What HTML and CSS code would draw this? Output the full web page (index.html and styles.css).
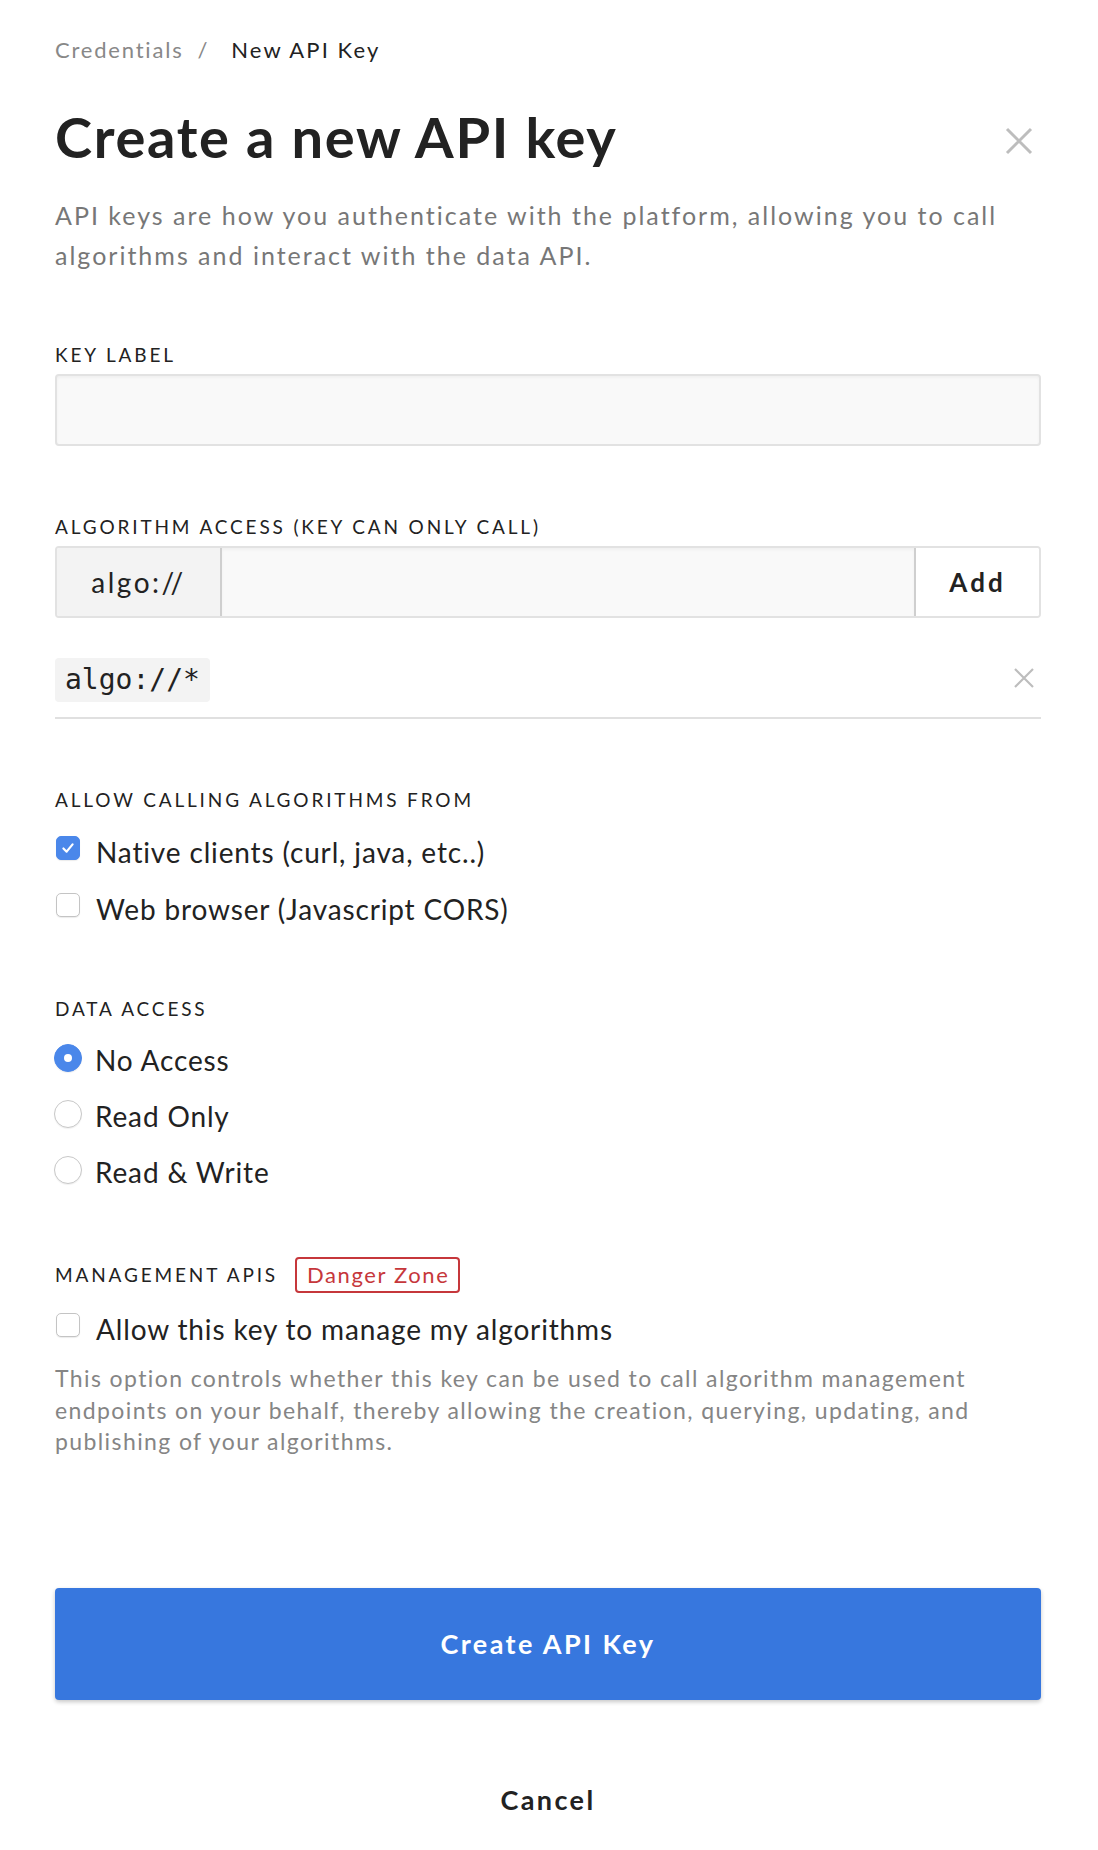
FILE: index.html
```html
<!DOCTYPE html>
<html lang="en">
<head>
<meta charset="utf-8">
<title>New API Key</title>
<link rel="stylesheet" href="styles.css">
</head>
<body>
<main class="page">
  <nav class="crumbs">
    <span class="crumb-link">Credentials</span>
    <span class="crumb-sep">/</span>
    <span class="crumb-current">New API Key</span>
  </nav>

  <header class="title-row">
    <h1 class="title">Create a new API key</h1>
    <button class="close" type="button" aria-label="Close">
      <svg width="28" height="28" viewBox="0 0 28 28"><path d="M2 2L26 26M26 2L2 26" stroke="#bdbdbd" stroke-width="3" fill="none"/></svg>
    </button>
  </header>

  <p class="intro">API keys are how you authenticate with the platform, allowing you to call<br>algorithms and interact with the data API.</p>

  <section class="field field-key">
    <div class="label">Key Label</div>
    <div class="input"></div>
  </section>

  <section class="field field-algo">
    <div class="label">Algorithm Access (Key can only call)</div>
    <div class="input-group">
      <div class="addon">algo://</div>
      <div class="group-input"></div>
      <button class="add-btn" type="button">Add</button>
    </div>
    <div class="tag-row">
      <code class="tag">algo://*</code>
      <button class="remove" type="button" aria-label="Remove">
        <svg width="20" height="20" viewBox="0 0 20 20"><path d="M1 1L19 19M19 1L1 19" stroke="#bdbdbd" stroke-width="2.2" fill="none"/></svg>
      </button>
    </div>
  </section>

  <section class="field field-allow">
    <div class="label">Allow calling algorithms from</div>
    <div class="check-row first">
      <span class="checkbox checked"><svg width="24" height="24" viewBox="0 0 24 24"><path d="M7 12.5L10.5 16L17 8" stroke="#fff" stroke-width="2.4" fill="none" stroke-linecap="round" stroke-linejoin="round"/></svg></span>
      <span class="opt-text">Native clients (curl, java, etc..)</span>
    </div>
    <div class="check-row">
      <span class="checkbox"></span>
      <span class="opt-text">Web browser (Javascript CORS)</span>
    </div>
  </section>

  <section class="field field-data">
    <div class="label">Data Access</div>
    <div class="radio-row first">
      <span class="radio checked"><span class="dot"></span></span>
      <span class="opt-text">No Access</span>
    </div>
    <div class="radio-row">
      <span class="radio"></span>
      <span class="opt-text">Read Only</span>
    </div>
    <div class="radio-row">
      <span class="radio"></span>
      <span class="opt-text">Read &amp; Write</span>
    </div>
  </section>

  <section class="field field-mgmt">
    <div class="mgmt-head">
      <div class="label">Management APIs</div>
      <span class="badge">Danger Zone</span>
    </div>
    <div class="check-row mgmt-row">
      <span class="checkbox"></span>
      <span class="opt-text">Allow this key to manage my algorithms</span>
    </div>
    <p class="help">This option controls whether this key can be used to call algorithm management<br>endpoints on your behalf, thereby allowing the creation, querying, updating, and<br>publishing of your algorithms.</p>
  </section>

  <button class="primary" type="button">Create API Key</button>
  <div class="cancel-wrap"><button class="cancel" type="button">Cancel</button></div>
</main>
</body>
</html>
```

FILE: styles.css
```css
* { box-sizing: border-box; }
html, body { margin: 0; padding: 0; background: #fff; }
body {
  font-family: Lato, "Noto Sans", sans-serif;
  color: #222;
}
button { font-family: inherit; border: 0; background: none; padding: 0; cursor: pointer; color: inherit; }

.page { padding: 35px 57px 30px 55px; }

.crumbs { display: flex; font-size: 22px; line-height: 30px; letter-spacing: 1.8px; }
.crumb-link { color: #888; }
.crumb-sep { color: #888; margin: 0 22px 0 14px; }
.crumb-current { color: #222; letter-spacing: 2.1px; }

.title-row { display: flex; justify-content: space-between; align-items: center; margin-top: 38px; }
.title { margin: 0; font-size: 56px; line-height: 67px; font-weight: 700; letter-spacing: 1.7px; color: #222; }
.close { width: 28px; height: 28px; margin: 9px 8px 0 0; display: flex; }

.intro { margin: 25px 0 0; font-size: 25px; line-height: 40px; letter-spacing: 2px; color: #777; }

.label {
  font-size: 19px; line-height: 24px; letter-spacing: 2.85px;
  text-transform: uppercase; color: #222;
}

.field-key { margin-top: 68px; }
.input {
  margin-top: 7px; height: 72px; background: #f9f9f9;
  border: 2px solid #e2e2e2; border-radius: 4px;
  box-shadow: inset 0 2px 3px rgba(0,0,0,0.04);
}

.field-algo { margin-top: 69px; }
.input-group {
  margin-top: 7px; display: flex; height: 72px;
  border: 2px solid #e2e2e2; border-radius: 4px; overflow: hidden;
}
.addon {
  width: 165px; background: #f3f3f3; border-right: 2px solid #cfcfcf;
  display: flex; align-items: center; justify-content: center;
  font-size: 28px; letter-spacing: 2.5px; color: #222;
}
.group-input { flex: 1; background: #f9f9f9; box-shadow: inset 0 2px 3px rgba(0,0,0,0.04); }
.add-btn {
  width: 125px; background: #fff; border-left: 2px solid #cfcfcf;
  font-size: 26px; font-weight: 700; letter-spacing: 3px; color: #222;
}

.tag-row {
  margin-top: 40px; display: flex; justify-content: space-between; align-items: center;
  padding-bottom: 15px; border-bottom: 2px solid #e0e0e0;
}
.tag {
  font-family: "DejaVu Sans Mono", "Liberation Mono", monospace;
  font-size: 28px; line-height: 44px; padding: 0 10px;
  background: #f3f3f3; border-radius: 4px; color: #222;
}
.remove { width: 20px; height: 20px; margin: 0 7px 4px 0; display: flex; }

.field-allow { margin-top: 69px; }
.check-row, .radio-row { display: flex; align-items: flex-start; height: 40px; }
.check-row.first { margin-top: 20px; }
.check-row + .check-row { margin-top: 17px; }
.opt-text { font-size: 28px; line-height: 40px; letter-spacing: 0.85px; color: #222; margin-left: 16px; }

.checkbox {
  width: 24px; height: 24px; margin: 4px 0 0 1px; flex: none;
  border: 1.5px solid #c4c4c4; border-radius: 5px; background: #fff;
  box-shadow: 0 1px 1px rgba(0,0,0,0.08);
  display: flex; align-items: center; justify-content: center;
}
.checkbox.checked { background: #4a87ea; border-color: #4a87ea; }
.checkbox svg { display: block; }

.field-data { margin-top: 68px; }
.radio-row.first { margin-top: 19px; }
.radio-row + .radio-row { margin-top: 16px; }
.radio {
  width: 28px; height: 28px; margin: 4px 0 0 -1px; flex: none;
  border: 1.5px solid #c8c8c8; border-radius: 50%; background: #fff;
  box-shadow: 0 1px 1px rgba(0,0,0,0.06);
  display: flex; align-items: center; justify-content: center;
}
.radio.checked { background: #4a87ea; border-color: #4a87ea; }
.dot { width: 8px; height: 8px; border-radius: 50%; background: #fff; }
.radio-row .opt-text { margin-left: 13px; }

.field-mgmt { margin-top: 65px; }
.mgmt-head { display: flex; align-items: center; gap: 17px; }
.badge {
  font-size: 22px; line-height: 32px; padding: 0 9px 0 10px; letter-spacing: 1.6px;
  border: 2px solid #c6373b; border-radius: 4px; color: #c6373b;
}
.check-row.mgmt-row { margin-top: 16px; }
.help { margin: 14px 0 0; font-size: 23px; line-height: 31.5px; letter-spacing: 1.4px; color: #858585; }

.primary {
  display: block; width: 100%; height: 112px; margin-top: 130px;
  background: #3777de; color: #fff; border-radius: 4px;
  box-shadow: 0 2px 4px rgba(0,0,0,0.22);
  font-size: 27px; font-weight: 700; letter-spacing: 2.4px;
}

.cancel-wrap { display: flex; justify-content: center; margin-top: 80px; }
.cancel { font-size: 27px; line-height: 40px; font-weight: 700; letter-spacing: 2.4px; color: #222; }
```
